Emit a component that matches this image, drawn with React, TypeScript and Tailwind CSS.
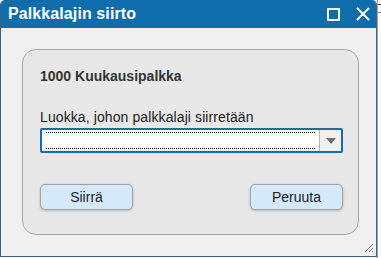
export default function App() {
  return (
    <div className="w-[381px] h-[258px] bg-[#f4f4f4] flex font-['Liberation_Sans',Arial,sans-serif] overflow-hidden">
      <div className="w-[377px] h-[257px] flex flex-col border-l border-b border-r border-[#3c5f86] rounded-t-[5px] overflow-hidden shrink-0">
        <header className="h-[28px] bg-[#0f6dab] flex items-center justify-between pl-[7px] pr-[6px] shrink-0">
          <h1 className="text-white font-bold text-[16px] leading-none tracking-[0.1px]">Palkkalajin siirto</h1>
          <div className="flex items-center gap-[16px]">
            <div className="w-[13px] h-[13px] border-2 border-white rounded-[1px]" />
            <svg className="w-[14px] h-[14px]" viewBox="0 0 14 14" fill="none" stroke="white" strokeWidth="2">
              <path d="M1 1L13 13M13 1L1 13" />
            </svg>
          </div>
        </header>

        <div className="flex-1 bg-[#f0f0f0] relative pt-[21px] pl-[21px] pr-[17px]">
          <div className="h-[186px] bg-[#e8e8e8] border border-[#a6a6a6] rounded-[14px] pt-[18px] px-[17px]">
            <div className="text-[14px] font-bold text-[#333333] leading-[16px]">1000 Kuukausipalkka</div>

            <div className="mt-[25px] text-[14px] text-[#222222] leading-[16px] tracking-[0.1px]">Luokka, johon palkkalaji siirretään</div>

            <div className="mt-[3px] h-[25px] w-[303px] flex border-2 border-[#1a6ca8] rounded-[2px] bg-white">
              <div className="flex-1 py-[2px] px-[4px]">
                <div className="h-full border-y border-dotted border-[#111]" />
              </div>
              <div className="w-[22px] bg-[#f1f1f1] border-l border-[#b5b5b5] flex items-center justify-center">
                <svg className="w-[10px] h-[6px]" viewBox="0 0 10 6">
                  <path d="M0 0H10L5 6Z" fill="#6c6c76" />
                </svg>
              </div>
            </div>

            <div className="mt-[31px] flex justify-between w-[303px]">
              <button className="w-[93px] h-[26px] bg-[#d4e9fa] border border-[#a3a3a3] rounded-[5px] shadow-[0_1px_3px_rgba(0,0,0,0.2)] text-[14px] text-[#222222]">
                Siirrä
              </button>
              <button className="w-[93px] h-[26px] bg-[#d4e9fa] border border-[#a3a3a3] rounded-[5px] shadow-[0_1px_3px_rgba(0,0,0,0.2)] text-[14px] text-[#222222]">
                Peruuta
              </button>
            </div>
          </div>

          <svg className="absolute right-[2px] bottom-[3px] w-[10px] h-[10px]" viewBox="0 0 10 10" stroke="#9a9a9a" strokeWidth="1">
            <path d="M9 1L1 9M9 5L5 9M9 8L8 9" />
          </svg>
        </div>
      </div>
      <div className="flex-1 bg-white border-l border-[#9aa] flex flex-col gap-[7px] pt-[4px]">
        <div className="h-[1px] bg-[#444]" />
        <div className="h-[1px] bg-[#888]" />
      </div>
    </div>
  )
}
